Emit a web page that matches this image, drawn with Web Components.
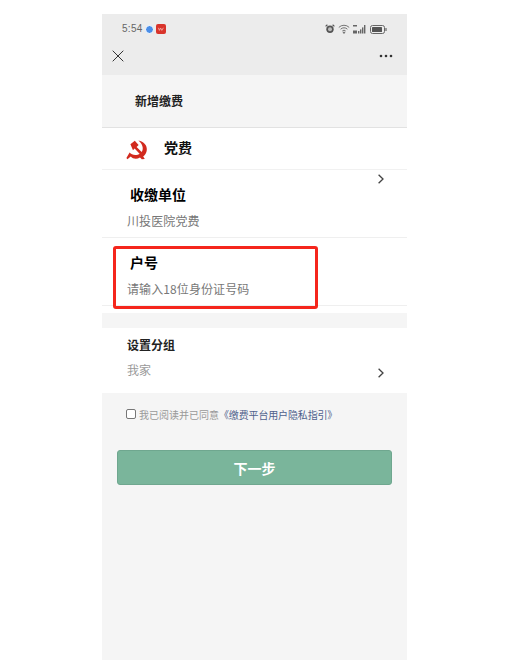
<!DOCTYPE html>
<html lang="zh">
<head>
<meta charset="utf-8">
<title>新增缴费</title>
<style>
    html, body { margin: 0; background: #fff; }
    body { font-family: "Noto Sans CJK SC", "Liberation Sans", sans-serif; }
</style>
</head>
<body>
<pay-phone>
    <top-bar></top-bar>
    <page-title>新增缴费</page-title>
    <party-row>党费</party-row>
    <form-row label="收缴单位" value="川投医院党费" arrow="top"></form-row>
    <form-row label="户号" value="请输入18位身份证号码" highlight></form-row>
    <section-gap></section-gap>
    <group-row></group-row>
    <agree-line></agree-line>
    <next-button>下一步</next-button>
</pay-phone>

<script>
const chevron = `<svg width="8" height="10" viewBox="0 0 8 10" fill="none" stroke="#444" stroke-width="1.3"><path d="M1.6 .8 6 5 1.6 9.2"/></svg>`;

class PayPhone extends HTMLElement {
    constructor() {
        super();
        this.attachShadow({ mode: 'open' });
        this.shadowRoot.innerHTML = `
            <style>
                :host {
                    display: flex;
                    flex-direction: column;
                    width: 305px;
                    height: 646px;
                    margin: 14px 0 0 102px;
                    background: #f5f5f5;
                    overflow: hidden;
                }
            </style>
            <slot></slot>
        `;
    }
}

class TopBar extends HTMLElement {
    constructor() {
        super();
        this.attachShadow({ mode: 'open' });
        this.shadowRoot.innerHTML = `
            <style>
                :host { display: block; height: 61px; background: #ececec; color: #666; }
                .status {
                    display: flex;
                    align-items: center;
                    height: 30px;
                    padding: 0 20px;
                    font: 10px/1 "Liberation Sans", sans-serif;
                    letter-spacing: .3px;
                }
                .dot { width: 9px; height: 9px; border-radius: 50%; background: #4a8ee8; border: 1px solid #fff; margin-left: 2px; box-sizing: border-box; }
                .app { width: 10px; height: 10px; border-radius: 2px; background: #d9342b; margin-left: 2px; }
                .right { margin-left: auto; display: flex; align-items: center; gap: 3px; }
                .nav { display: flex; justify-content: space-between; align-items: center; padding: 0 14px 0 10px; height: 24px; }
                svg { display: block; }
            </style>
            <div class="status">
                <span>5:54</span><span class="dot"></span>
                <svg class="app" width="10" height="10" viewBox="0 0 10 10"><path d="M2.4 3.8 3.4 6.4 4.6 4 5.8 6.4 7.4 3.8" fill="none" stroke="#f3b9b4" stroke-width=".8"/></svg>
                <div class="right">
                    <svg width="10" height="10" viewBox="0 0 10 10"><circle cx="5" cy="5.3" r="3.7" fill="#555"/><circle cx="5" cy="5.3" r="2" fill="#bbb"/><path d="M.6 2.4 2.4.8M9.4 2.4 7.6.8" stroke="#555" stroke-width="1.2"/></svg>
                    <svg width="12" height="10" viewBox="0 0 12 10" fill="none" stroke="#666" stroke-width=".9"><path d="M.8 3.4a7.4 7.4 0 0 1 10.4 0M2.6 5.2a4.8 4.8 0 0 1 6.8 0M4.3 7a2.4 2.4 0 0 1 3.4 0"/><circle cx="6" cy="8.6" r=".7" fill="#666"/></svg>
                    <svg width="14" height="10" viewBox="0 0 14 10" fill="#666"><rect x="0" y="1" width="4" height="1.5"/><rect x="0" y="6.5" width="4" height="3"/><rect x="5" y="7" width="1.4" height="2.5"/><rect x="7" y="5.4" width="1.4" height="4.1"/><rect x="9" y="3.4" width="1.4" height="6.1"/><rect x="11" y="1" width="1.4" height="8.5"/></svg>
                    <svg width="17" height="9" viewBox="0 0 17 9"><rect x=".5" y=".5" width="14" height="8" rx="2" fill="none" stroke="#666"/><rect x="2" y="2" width="10" height="5" rx=".6" fill="#555"/><rect x="15.4" y="3" width="1.2" height="3" fill="#666"/></svg>
                </div>
            </div>
            <div class="nav">
                <svg width="12" height="12" viewBox="0 0 12 12" stroke="#333" stroke-width="1"><path d="M.7 .7 11.3 11.3M11.3 .7 .7 11.3"/></svg>
                <svg width="14" height="4" viewBox="0 0 14 4" fill="#333"><circle cx="2" cy="2" r="1.3"/><circle cx="7" cy="2" r="1.3"/><circle cx="12" cy="2" r="1.3"/></svg>
            </div>
        `;
    }
}

class PageTitle extends HTMLElement {
    constructor() {
        super();
        this.attachShadow({ mode: 'open' });
        this.shadowRoot.innerHTML = `
            <style>
                :host {
                    display: flex;
                    align-items: center;
                    box-sizing: border-box;
                    height: 53px;
                    padding: 0 0 2px 33px;
                    font-size: 12px;
                    font-weight: 700;
                    color: #222;
                    background: #f5f5f5;
                    border-bottom: 1px solid #e2e2e2;
                }
            </style>
            <slot></slot>
        `;
    }
}

class PartyRow extends HTMLElement {
    constructor() {
        super();
        this.attachShadow({ mode: 'open' });
        this.shadowRoot.innerHTML = `
            <style>
                :host {
                    display: flex;
                    align-items: center;
                    box-sizing: border-box;
                    height: 42px;
                    background: #fff;
                    border-bottom: 1px solid #f1f1f1;
                    padding-left: 22px;
                    font-size: 14px;
                    font-weight: 700;
                    color: #111;
                }
                svg { display: block; margin-right: 14px; margin-top: 3px; }
                span { margin-top: -3px; }
            </style>
            <svg width="26" height="26" viewBox="0 0 26 26" fill="#d22a1e">
                <path d="M6.4 7.2 10.8 3.8 14.6 8 12.6 10 19.2 16.4 17 18.2 10.6 11.6 9 13.2Z"/>
                <path d="M14.4 3.4C19.8 4.4 23.4 8.4 22.8 13 22.5 15.6 21.2 18 19.2 19.6L20.8 22 17.8 22.2 16 20.6C12.8 22.4 9 22.2 6.8 19.6L3.4 22.2 2.4 21 5.6 15.4C7.6 18 12.4 19 16.2 16.4 20 13.6 19.8 8 14.4 3.4Z"/>
            </svg>
            <span><slot></slot></span>
        `;
    }
}

class FormRow extends HTMLElement {
    constructor() {
        super();
        this.attachShadow({ mode: 'open' });
    }

    connectedCallback() {
        const highlight = this.hasAttribute('highlight');
        this.shadowRoot.innerHTML = `
            <style>
                :host {
                    display: block;
                    position: relative;
                    z-index: ${highlight ? 1 : 0};
                    box-sizing: border-box;
                    height: 68px;
                    background: #fff;
                    border-bottom: 1px solid #efefef;
                    padding: 14px 0 0 25px;
                }
                .label { font-size: 14px; line-height: 20px; font-weight: 700; color: #000; padding-left: 3px; }
                .value { font-size: 12px; line-height: 18px; margin-top: 8px; color: #777; letter-spacing: .1px; }
                .arrow { position: absolute; right: 22px; top: 4px; }
                .arrow svg { display: block; }
                .mark {
                    position: absolute;
                    left: 11px;
                    top: 8px;
                    width: 205px;
                    height: 63px;
                    box-sizing: border-box;
                    border: 3px solid #f5261c;
                    border-radius: 3px;
                }
            </style>
            <div class="label">${this.getAttribute('label')}</div>
            <div class="value">${this.getAttribute('value')}</div>
            ${this.getAttribute('arrow') ? `<span class="arrow">${chevron}</span>` : ''}
            ${highlight ? '<div class="mark"></div>' : ''}
        `;
    }
}

class SectionGap extends HTMLElement {
    constructor() {
        super();
        this.attachShadow({ mode: 'open' });
        this.shadowRoot.innerHTML = `
            <style>
                :host { display: block; height: 15px; border-top: 7px solid #fff; background: #f5f5f5; flex: none; }
            </style>
        `;
    }
}

class GroupRow extends HTMLElement {
    constructor() {
        super();
        this.attachShadow({ mode: 'open' });
        this.shadowRoot.innerHTML = `
            <style>
                :host {
                    display: block;
                    position: relative;
                    box-sizing: border-box;
                    height: 65px;
                    background: #fff;
                    padding: 8px 0 0 25px;
                }
                .label { font-size: 12px; line-height: 18px; font-weight: 700; color: #222; }
                .value { font-size: 12px; line-height: 18px; margin-top: 7px; color: #999; }
                .arrow { position: absolute; right: 22px; top: 40px; }
                .arrow svg { display: block; }
            </style>
            <div class="label">设置分组</div>
            <div class="value">我家</div>
            <span class="arrow">${chevron}</span>
        `;
    }
}

class AgreeLine extends HTMLElement {
    constructor() {
        super();
        this.attachShadow({ mode: 'open' });
        this.shadowRoot.innerHTML = `
            <style>
                :host {
                    display: flex;
                    align-items: center;
                    height: 14px;
                    margin-top: 14px;
                    padding-left: 24px;
                    font-size: 10px;
                    color: #999;
                }
                i { width: 10px; height: 10px; box-sizing: border-box; border: 1px solid #777; border-radius: 2px; background: #fff; margin-right: 3px; }
                b { font-weight: 400; color: #4e5f8c; letter-spacing: -.15px; }
            </style>
            <i></i><span>我已阅读并已同意</span><b>《缴费平台用户隐私指引》</b>
        `;
    }
}

class NextButton extends HTMLElement {
    constructor() {
        super();
        this.attachShadow({ mode: 'open' });
        this.shadowRoot.innerHTML = `
            <style>
                :host {
                    display: flex;
                    align-items: center;
                    justify-content: center;
                    box-sizing: border-box;
                    height: 35px;
                    margin: 29px 15px 0;
                    border: 1px solid #6fa78f;
                    border-radius: 3px;
                    background: #7ab59b;
                    color: #fff;
                    font-size: 14px;
                    font-weight: 700;
                }
            </style>
            <slot></slot>
        `;
    }
}

customElements.define('pay-phone', PayPhone);
customElements.define('top-bar', TopBar);
customElements.define('page-title', PageTitle);
customElements.define('party-row', PartyRow);
customElements.define('form-row', FormRow);
customElements.define('section-gap', SectionGap);
customElements.define('group-row', GroupRow);
customElements.define('agree-line', AgreeLine);
customElements.define('next-button', NextButton);
</script>
</body>
</html>
